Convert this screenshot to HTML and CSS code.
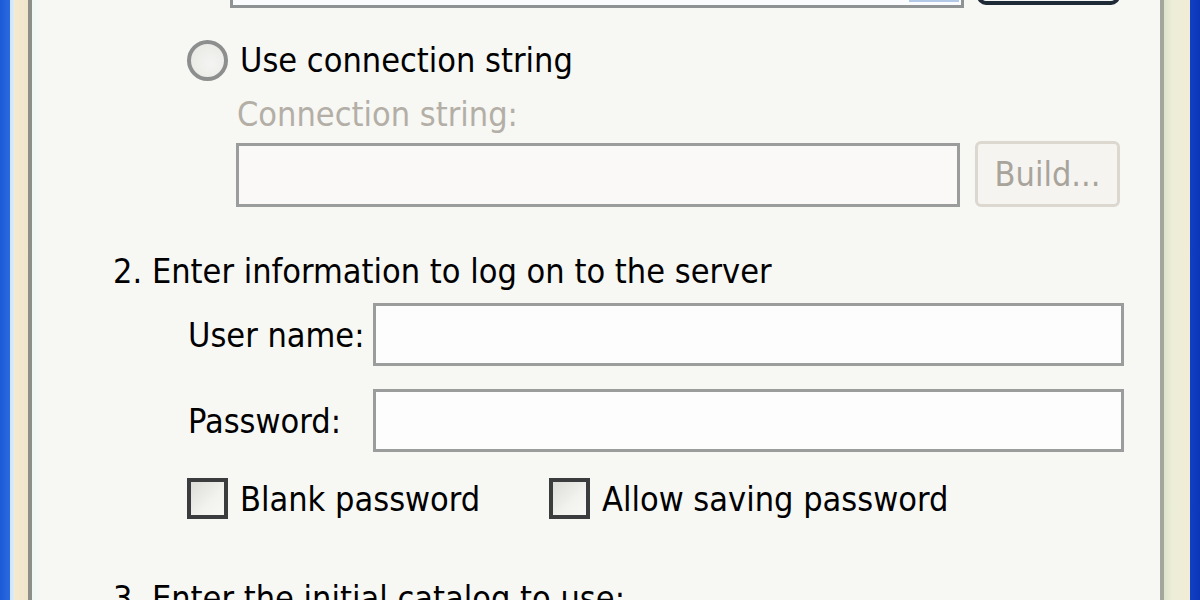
FILE: index.html
```html
<!doctype html>
<html lang="en">
<head>
    <meta charset="UTF-8">
    <title>Data Link Properties</title>
    <link rel="stylesheet" href="styles.css">
</head>
<body>
    <div class="window">
        <div class="frame frame-left"></div>
        <div class="panel">
            <!-- 1. data source row, mostly scrolled off the top -->
            <div class="row top-row">
                <div class="combo">
                    <div class="combo-field"></div>
                    <div class="combo-drop"></div>
                </div>
                <div class="btn btn-top"></div>
            </div>

            <div class="row option">
                <span class="radio"></span>
                <span class="text">Use connection string</span>
            </div>
            <div class="sub-label disabled">Connection string:</div>
            <div class="row sub-row">
                <div class="field field-disabled conn"></div>
                <div class="btn btn-disabled">Build...</div>
            </div>

            <div class="heading">2. Enter information to log on to the server</div>
            <div class="row field-row first">
                <label class="field-label">User name:</label>
                <div class="field wide"></div>
            </div>
            <div class="row field-row">
                <label class="field-label">Password:</label>
                <div class="field wide"></div>
            </div>
            <div class="row checks">
                <span class="check-item">
                    <span class="checkbox"></span>
                    <span class="text">Blank password</span>
                </span>
                <span class="check-item">
                    <span class="checkbox"></span>
                    <span class="text">Allow saving password</span>
                </span>
            </div>

            <div class="heading last">3. Enter the initial catalog to use:</div>
        </div>
        <div class="frame frame-right"></div>
    </div>
</body>
</html>
```

FILE: styles.css
```css
* {
    margin: 0;
    padding: 0;
    box-sizing: border-box;
}
html, body {
    width: 1200px;
    height: 600px;
    overflow: hidden;
}
body {
    font-family: "DejaVu Sans Condensed", "Liberation Sans", sans-serif;
    font-size: 34px;
    color: #000;
    background: #f7f7f4;
}
.window {
    display: flex;
    height: 600px;
}
.frame {
    width: 40px;
    flex: none;
}
.frame-left {
    background: linear-gradient(to right,
        #1c5ad6 0, #2a6ae0 10px,
        #cfe4f8 10px, #d8ecfa 14px,
        #f4ead0 14px, #f1e6cc 28px,
        #8c9088 28px, #8c9088 32px,
        #eef8f4 32px, #f7f7f4 40px);
}
.frame-right {
    background: linear-gradient(to right,
        #a4a89c 0, #a4a89c 4px,
        #dde4c8 4px, #eceed8 12px, #f2ecd6 30px,
        #1040c4 30px, #0c36b8 40px);
}
.panel {
    flex: 1;
    overflow: hidden;
    background: #f7f7f4;
}
.row {
    display: flex;
    align-items: center;
}

/* top combo + button, cut off by the top edge */
.top-row {
    margin-top: -55px;
    align-items: flex-start;
}
.combo {
    display: flex;
    margin-left: 190px;
    height: 63px;
    border: 3px solid #8f9394;
    border-top: none;
    background: #fbfcfd;
}
.combo-field {
    width: 676px;
}
.combo-drop {
    width: 50px;
    margin: 0 2px 3px 0;
    background: #d6e4f8;
    border: 2px solid #b4c8e8;
}
.btn {
    display: flex;
    align-items: center;
    justify-content: center;
    flex: none;
}
.btn-top {
    margin-left: 13px;
    width: 143px;
    height: 60px;
    border: 4px solid #1e2a36;
    border-radius: 9px;
    background: #f4f6f6;
}

.text {
    line-height: 40px;
    white-space: nowrap;
}
.option {
    margin-top: 32px;
    height: 40px;
}
.radio {
    flex: none;
    width: 41px;
    height: 41px;
    margin-left: 147px;
    margin-right: 12px;
    border: 4px solid #8d8e8e;
    border-radius: 50%;
    background: radial-gradient(circle at 60% 60%, #f4f4f2 0, #e6e6e2 100%);
}
.sub-label {
    margin: 14px 0 0 197px;
    line-height: 40px;
    white-space: nowrap;
}
.disabled {
    color: #b3afa6;
}
.sub-row {
    margin-top: 9px;
    align-items: flex-start;
}
.field {
    flex: none;
    height: 63px;
    border: 3px solid #9b9c9c;
    background: #fdfdfe;
}
.conn {
    margin-left: 196px;
    width: 724px;
    height: 64px;
}
.field-disabled {
    background: #fbf9f8;
}
.btn-disabled {
    margin: -2px 0 0 15px;
    width: 145px;
    height: 66px;
    border: 3px solid #dcd8d0;
    border-radius: 6px;
    background: #f6f4f0;
    color: #a8a49c;
}

.heading {
    margin: 44px 0 0 73px;
    line-height: 40px;
    white-space: nowrap;
}
.heading.last {
    margin-top: 59px;
}
.field-row {
    margin-top: 23px;
}
.field-row.first {
    margin-top: 12px;
}
.field-label {
    flex: none;
    width: 333px;
    padding-left: 148px;
    line-height: 40px;
    white-space: nowrap;
}
.field.wide {
    width: 751px;
}
.checks {
    margin-top: 26px;
    height: 41px;
    padding-left: 147px;
}
.check-item {
    display: flex;
    align-items: center;
}
.check-item:first-child {
    width: 362px;
}
.checkbox {
    flex: none;
    width: 41px;
    height: 41px;
    margin-right: 12px;
    border: 4px solid #3a3c3e;
    background: linear-gradient(135deg, #dcdcd8 0, #f2f2ee 60%, #f8f8f6 100%);
}
```
